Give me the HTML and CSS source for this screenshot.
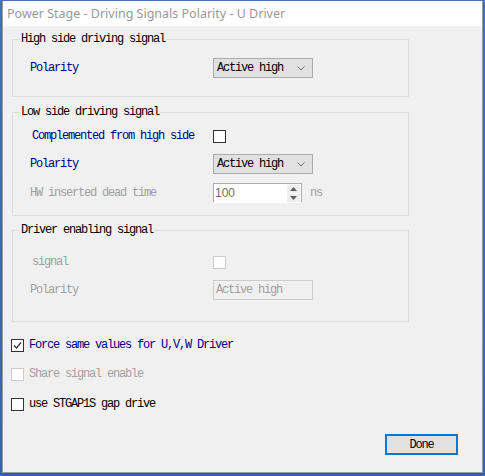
FILE: index.html
```html
<!DOCTYPE html>
<html>
<head>
<meta charset="utf-8">
<link rel="stylesheet" href="styles.css">
</head>
<body>
<div class="window">
  <div class="titlebar">Power Stage - Driving Signals Polarity - U Driver</div>
  <div class="content">
    <fieldset class="group g1">
      <legend>High side driving signal</legend>
      <div class="row">
        <span class="lbl navy">Polarity</span>
        <div class="select"><span>Active high</span><svg class="chev" width="8" height="5" viewBox="0 0 8 5"><polyline points="0.5,0.5 4,4 7.5,0.5" fill="none" stroke="#707070" stroke-width="1"/></svg></div>
      </div>
    </fieldset>

    <fieldset class="group g2">
      <legend>Low side driving signal</legend>
      <div class="row">
        <span class="lbl navy shift">Complemented from high side</span>
        <span class="cb"></span>
      </div>
      <div class="row r-gap8">
        <span class="lbl navy">Polarity</span>
        <div class="select"><span>Active high</span><svg class="chev" width="8" height="5" viewBox="0 0 8 5"><polyline points="0.5,0.5 4,4 7.5,0.5" fill="none" stroke="#707070" stroke-width="1"/></svg></div>
      </div>
      <div class="row r-gap9">
        <span class="lbl grey">HW inserted dead time</span>
        <div class="spin">
          <span class="spin-val">100</span>
          <div class="spin-btns">
            <span class="sb"><svg width="7" height="4" viewBox="0 0 7 4"><polygon points="3.5,0 7,4 0,4" fill="#606060"/></svg></span>
            <span class="sb"><svg width="7" height="4" viewBox="0 0 7 4"><polygon points="0,0 7,0 3.5,4" fill="#606060"/></svg></span>
          </div>
        </div>
        <span class="unit grey">ns</span>
      </div>
    </fieldset>

    <fieldset class="group g3">
      <legend>Driver enabling signal</legend>
      <div class="row">
        <span class="lbl grey shift">signal</span>
        <span class="cb disabled"></span>
      </div>
      <div class="row r-gap8">
        <span class="lbl grey">Polarity</span>
        <div class="textbox">Active high</div>
      </div>
    </fieldset>

    <div class="checks">
      <div class="crow c1">
        <span class="cb checked"><svg width="11" height="11" viewBox="0 0 11 11"><polyline points="2,5.5 4.5,8 9,2.5" fill="none" stroke="#333" stroke-width="1.3"/></svg></span>
        <span class="navy">Force same values for U,V,W Driver</span>
      </div>
      <div class="crow c2">
        <span class="cb disabled"></span>
        <span class="grey">Share signal enable</span>
      </div>
      <div class="crow c3">
        <span class="cb"></span>
        <span class="black">use STGAP1S gap drive</span>
      </div>
    </div>

    <div class="footer">
      <button class="btn">Done</button>
    </div>
  </div>
</div>
</body>
</html>
```

FILE: styles.css
```css
html, body {
  margin: 0;
  padding: 0;
}
body {
  width: 485px;
  height: 476px;
  box-sizing: border-box;
  padding: 1px 2px 0 2px;
  background: linear-gradient(#4a76c2, #3c68b8);
  overflow: hidden;
}
.window {
  width: 481px;
  height: 472px;
  box-sizing: border-box;
  border: 1px solid #9c9c9c;
  border-top: 0;
  background: #f0f0f0;
  box-shadow: 0 1px 3px rgba(0,0,0,0.25);
  display: flex;
  flex-direction: column;
}
.titlebar {
  height: 25px;
  background: #ffffff;
  color: #999999;
  font-family: "Noto Sans", sans-serif;
  font-size: 12.5px;
  line-height: 25px;
  padding-left: 4px;
  white-space: nowrap;
}
.content {
  flex: 1;
  padding: 6px 0 0 9px;
  display: flex;
  flex-direction: column;
  font-family: "Liberation Mono", monospace;
  font-size: 12px;
  letter-spacing: -1.2px;
  color: #000;
}
.group {
  width: 397px;
  box-sizing: border-box;
  margin: 0;
  border: 1px solid #dcdcdc;
  padding: 0;
  min-width: 0;
}
.group legend {
  margin-left: 7px;
  padding: 0 1px;
  line-height: 14px;
  height: 14px;
  color: #000;
}
.g1 { padding: 12px 0 18px 0; }
.g2 { margin-top: 8px; padding: 7px 0 12px 0; }
.g3 { margin-top: 7px; padding: 15px 0 21px 0; }
.row {
  display: flex;
  align-items: center;
  height: 20px;
}
.r-gap8 { margin-top: 8px; }
.r-gap9 { margin-top: 9px; }
.lbl {
  width: 183px;
  padding-left: 17px;
  white-space: nowrap;
}
.lbl.shift {
  width: 181px;
  padding-left: 19px;
}
.navy { color: #000080; }
.grey { color: #a0a0a0; }
.black { color: #000; }
.select {
  width: 100px;
  height: 20px;
  box-sizing: border-box;
  border: 1px solid #adadad;
  background: #e1e1e1;
  display: flex;
  align-items: center;
  justify-content: space-between;
  padding: 0 7px 0 3px;
}
.select span { white-space: nowrap; }
.chev { display: block; }
.cb {
  width: 13px;
  height: 13px;
  box-sizing: border-box;
  border: 1px solid #333;
  background: #fff;
  display: inline-flex;
  align-items: center;
  justify-content: center;
  flex-shrink: 0;
}
.cb.disabled {
  border-color: #cccccc;
}
.cb.checked svg { display: block; }
.spin {
  width: 89px;
  height: 20px;
  box-sizing: border-box;
  border: 1px solid #adadad;
  border-bottom-color: #ffffff;
  background: #fff;
  display: flex;
  align-items: center;
  justify-content: space-between;
  padding: 0 1px 0 1px;
}
.spin-val {
  font-family: "Liberation Sans", sans-serif;
  font-size: 12px;
  letter-spacing: 0;
  color: #6d6d6d;
}
.spin-btns {
  display: flex;
  flex-direction: column;
  gap: 1px;
}
.sb {
  width: 13px;
  height: 8px;
  background: #eeeeee;
  border: 0;
  display: flex;
  align-items: center;
  justify-content: center;
}
.sb svg { display: block; }
.unit {
  margin-left: 8px;
}
.textbox {
  width: 100px;
  height: 20px;
  box-sizing: border-box;
  border: 1px solid #cccccc;
  color: #a0a0a0;
  display: flex;
  align-items: center;
  padding-left: 2px;
  white-space: nowrap;
}
.checks {
  display: flex;
  flex-direction: column;
  margin-left: -1px;
}
.crow {
  display: flex;
  align-items: center;
  height: 20px;
  gap: 5px;
  white-space: nowrap;
}
.c1 { margin-top: 13px; }
.c2 { margin-top: 9px; }
.c3 { margin-top: 10px; }
.footer {
  display: flex;
  justify-content: flex-end;
  padding-right: 24px;
  margin-top: 20px;
}
.btn {
  width: 73px;
  height: 21px;
  box-sizing: border-box;
  border: 2px solid #0078d7;
  background: #e1e1e1;
  font-family: "Liberation Mono", monospace;
  font-size: 12px;
  letter-spacing: -1.2px;
  color: #000;
  padding: 0;
  margin: 0;
}
```
